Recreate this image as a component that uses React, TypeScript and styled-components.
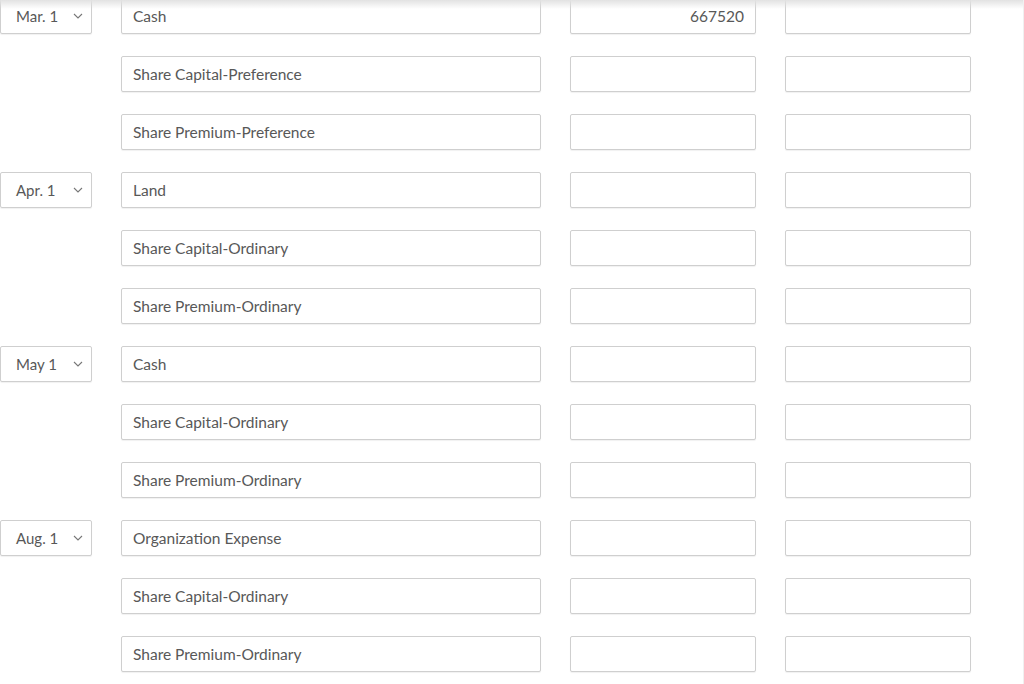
import styled, { createGlobalStyle } from 'styled-components';

const GlobalStyle = createGlobalStyle`
	html, body {
		margin: 0;
		padding: 0;
		background: #ffffff;
	}
	body {
		font-family: Lato, 'Open Sans', 'Liberation Sans', sans-serif;
		color: #555555;
	}
`;

type Entry = {
	date?: string;
	account: string;
	debit?: string;
	credit?: string;
};

const entries: Entry[] = [
	{ date: 'Mar. 1', account: 'Cash', debit: '667520' },
	{ account: 'Share Capital-Preference' },
	{ account: 'Share Premium-Preference' },
	{ date: 'Apr. 1', account: 'Land' },
	{ account: 'Share Capital-Ordinary' },
	{ account: 'Share Premium-Ordinary' },
	{ date: 'May 1', account: 'Cash' },
	{ account: 'Share Capital-Ordinary' },
	{ account: 'Share Premium-Ordinary' },
	{ date: 'Aug. 1', account: 'Organization Expense' },
	{ account: 'Share Capital-Ordinary' },
	{ account: 'Share Premium-Ordinary' },
];

export default function App() {
	return (
		<>
			<GlobalStyle />
			<Page>
				<TopShade />
				<Table>
					{entries.map((e, i) => (
						<Row key={i}>
							{e.date ? (
								<DateSelect>
									<DateText>{e.date}</DateText>
									<svg width='10' height='6' viewBox='0 0 10 6' fill='none'>
										<path d='M1 1l4 4 4-4' stroke='#777' strokeWidth='1.1' />
									</svg>
								</DateSelect>
							) : (
								<span />
							)}
							<Field>{e.account}</Field>
							<Field align='right'>{e.debit}</Field>
							<Field align='right'>{e.credit}</Field>
						</Row>
					))}
				</Table>
			</Page>
		</>
	);
}

const Page = styled.div`
	position: relative;
	width: 1024px;
	height: 684px;
	overflow: hidden;
	box-sizing: border-box;
	border-right: 1px solid #f0f0f0;
	padding-right: 4px;
`;

const TopShade = styled.div`
	position: absolute;
	top: 0;
	left: 0;
	right: 0;
	height: 9px;
	background: linear-gradient(180deg, #e2e2e2 0%, rgba(255, 255, 255, 0) 100%);
	pointer-events: none;
	z-index: 2;
`;

const Table = styled.div`
	display: flex;
	flex-direction: column;
	gap: 22px;
	margin-top: -2px;
`;

const Row = styled.div`
	display: grid;
	grid-template-columns: 92px 420px 186px 186px;
	column-gap: 29px;
	height: 36px;
`;

const Box = styled.div`
	box-sizing: border-box;
	height: 36px;
	border: 1px solid #cfcfcf;
	border-radius: 2px;
	box-shadow: 0 1px 1px rgba(0, 0, 0, 0.06);
	background: #fff;
	font-size: 15.5px;
	color: #585858;
	display: flex;
	align-items: center;
`;

const DateSelect = styled(Box)`
	padding: 0 8px 0 15px;
	justify-content: space-between;
`;

const DateText = styled.span`
	font-size: 15px;
`;

const Field = styled(Box)<{ align?: 'left' | 'right' }>`
	padding: 0 11px 0 11px;
	justify-content: ${(p) => (p.align === 'right' ? 'flex-end' : 'flex-start')};
`;
